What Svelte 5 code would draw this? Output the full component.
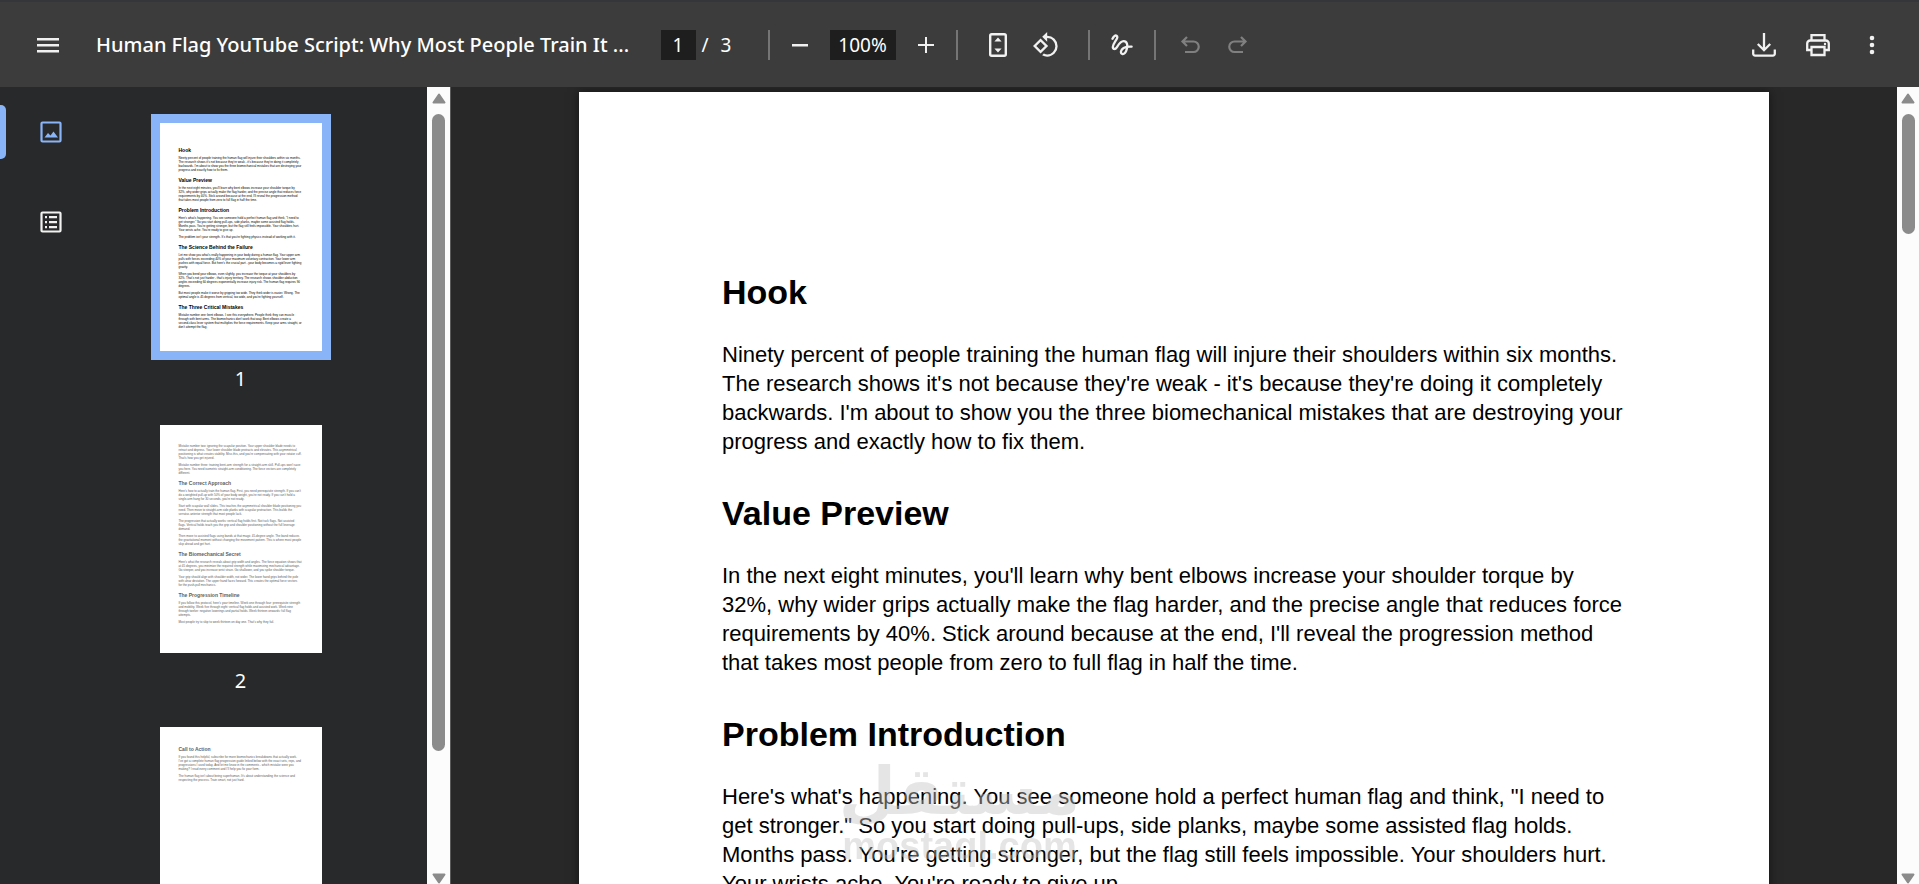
<script>
  const title = "Human Flag YouTube Script: Why Most People Train It ...";

  let currentPage = $state("1");
  let zoom = $state("100%");
  let activeTab = $state("thumbnails");

  // Every block is a heading or a paragraph; "\n" marks the line ends of the PDF
  const pages = [
    [
      { type: "h", text: "Hook" },
      {
        type: "p",
        text: "Ninety percent of people training the human flag will injure their shoulders within six months.\nThe research shows it's not because they're weak - it's because they're doing it completely\nbackwards. I'm about to show you the three biomechanical mistakes that are destroying your\nprogress and exactly how to fix them.",
      },
      { type: "h", text: "Value Preview" },
      {
        type: "p",
        text: "In the next eight minutes, you'll learn why bent elbows increase your shoulder torque by\n32%, why wider grips actually make the flag harder, and the precise angle that reduces force\nrequirements by 40%. Stick around because at the end, I'll reveal the progression method\nthat takes most people from zero to full flag in half the time.",
      },
      { type: "h", text: "Problem Introduction" },
      {
        type: "p",
        text: "Here's what's happening. You see someone hold a perfect human flag and think, \"I need to\nget stronger.\" So you start doing pull-ups, side planks, maybe some assisted flag holds.\nMonths pass. You're getting stronger, but the flag still feels impossible. Your shoulders hurt.\nYour wrists ache. You're ready to give up.",
      },
      {
        type: "p",
        text: "The problem isn't your strength. It's that you're fighting physics instead of working with it.",
      },
      { type: "h", text: "The Science Behind the Failure" },
      {
        type: "p",
        text: "Let me show you what's really happening in your body during a human flag. Your upper arm\npulls with forces exceeding 40% of your maximum voluntary contraction. Your lower arm\npushes with equal force. But here's the crucial part - your body becomes a rigid lever fighting\ngravity.",
      },
      {
        type: "p",
        text: "When you bend your elbows, even slightly, you increase the torque at your shoulders by\n32%. That's not just harder - that's injury territory. The research shows shoulder abduction\nangles exceeding 60 degrees exponentially increase injury risk. The human flag requires 90\ndegrees.",
      },
      {
        type: "p",
        text: "But most people make it worse by gripping too wide. They think wider is easier. Wrong. The\noptimal angle is 45 degrees from vertical, too wide, and you're fighting yourself.",
      },
      { type: "h", text: "The Three Critical Mistakes" },
      {
        type: "p",
        text: "Mistake number one: bent elbows. I see this everywhere. People think they can muscle\nthrough with bent arms. The biomechanics don't work that way. Bent elbows create a\nsecond-class lever system that multiplies the force requirements. Keep your arms straight, or\ndon't attempt the flag.",
      },
    ],
    [
      {
        type: "p",
        text: "Mistake number two: ignoring the scapular position. Your upper shoulder blade needs to\nretract and depress. Your lower shoulder blade protracts and elevates. This asymmetrical\npositioning is what creates stability. Miss this, and you're compensating with your rotator cuff.\nThat's how you get injured.",
      },
      {
        type: "p",
        text: "Mistake number three: training bent-arm strength for a straight-arm skill. Pull-ups won't save\nyou here. You need isometric straight-arm conditioning. The force vectors are completely\ndifferent.",
      },
      { type: "h", text: "The Correct Approach" },
      {
        type: "p",
        text: "Here's how to actually train the human flag. First, you need prerequisite strength. If you can't\ndo a weighted pull-up with 50% of your body weight, you're not ready. If you can't hold a\nsingle-arm hang for 30 seconds, you're not ready.",
      },
      {
        type: "p",
        text: "Start with scapular wall slides. This teaches the asymmetrical shoulder blade positioning you\nneed. Then move to straight-arm side planks with scapular protraction. This builds the\nserratus anterior strength that most people lack.",
      },
      {
        type: "p",
        text: "The progression that actually works: vertical flag holds first. Not tuck flags. Not assisted\nflags. Vertical holds teach you the grip and shoulder positioning without the full leverage\ndemand.",
      },
      {
        type: "p",
        text: "Then move to assisted flags using bands at that magic 45-degree angle. The band reduces\nthe gravitational moment without changing the movement pattern. This is where most people\nskip ahead and get hurt.",
      },
      { type: "h", text: "The Biomechanical Secret" },
      {
        type: "p",
        text: "Here's what the research reveals about grip width and angles. The force equation shows that\nat 45 degrees, you minimize the required strength while maximizing mechanical advantage.\nGo steeper, and you increase wrist strain. Go shallower, and you spike shoulder torque.",
      },
      {
        type: "p",
        text: "Your grip should align with shoulder width, not wider. The lower hand grips behind the pole\nwith ulnar deviation. The upper hand faces forward. This creates the optimal force vectors\nfor the push-pull mechanics.",
      },
      { type: "h", text: "The Progression Timeline" },
      {
        type: "p",
        text: "If you follow this protocol, here's your timeline. Week one through four: prerequisite strength\nand mobility. Week five through eight: vertical flag holds and assisted work. Week nine\nthrough twelve: negative lowerings and partial holds. Week thirteen onwards: full flag\nattempts.",
      },
      {
        type: "p",
        text: "Most people try to skip to week thirteen on day one. That's why they fail.",
      },
    ],
    [
      { type: "h", text: "Call to Action" },
      {
        type: "p",
        text: "If you found this helpful, subscribe for more biomechanics breakdowns that actually work.\nI've got a complete human flag progression guide linked below with the exact sets, reps, and\nprogressions I used today. And let me know in the comments - which mistake were you\nmaking? I read every comment and I'll help you fix your form.",
      },
      {
        type: "p",
        text: "The human flag isn't about being superhuman. It's about understanding the science and\nrespecting the process. Train smart, not just hard.",
      },
    ],
  ];
</script>

{#snippet blocks(list)}
  {#each list as block}
    {#if block.type === "h"}
      <h2>{block.text}</h2>
    {:else}
      <p>{block.text}</p>
    {/if}
  {/each}
{/snippet}

{#snippet scrollbar(kind)}
  <div class="scrollbar {kind}" aria-hidden="true">
    <svg class="arrow" width="14" height="11" viewBox="0 0 14 11">
      <path d="M7 1.5 12.5 9.5H1.5z" fill="#8b8b8b" stroke="#8b8b8b" stroke-width="2" stroke-linejoin="round" />
    </svg>
    <div class="track"><div class="thumb"></div></div>
    <svg class="arrow" width="14" height="11" viewBox="0 0 14 11">
      <path d="M7 9.5 12.5 1.5H1.5z" fill="#8b8b8b" stroke="#8b8b8b" stroke-width="2" stroke-linejoin="round" />
    </svg>
  </div>
{/snippet}

<div class="app">
  <header class="toolbar">
    <div class="start">
      <button class="btn" aria-label="Menu">
        <svg width="22" height="16" viewBox="0 0 22 16" fill="#f1f1f1">
          <path d="M0 1h22v2.5H0zM0 7h22v2.5H0zM0 13h22v2.5H0z" />
        </svg>
      </button>
      <h1 class="title">{title}</h1>
    </div>

    <div class="center">
      <div class="page-selector">
        <input class="field page-field" aria-label="Page number" bind:value={currentPage} />
        <span class="slash">/</span>
        <span>{pages.length}</span>
      </div>
      <span class="separator"></span>
      <button class="btn small" aria-label="Zoom out">
        <svg width="18" height="18" viewBox="0 0 18 18" fill="#f1f1f1"><path d="M1 8h16v2.5H1z" /></svg>
      </button>
      <input class="field zoom-field" aria-label="Zoom level" bind:value={zoom} />
      <button class="btn small" aria-label="Zoom in">
        <svg width="18" height="18" viewBox="0 0 18 18" fill="#f1f1f1">
          <path d="M1 8h7V1h2v7h7v2h-7v7H8v-7H1z" />
        </svg>
      </button>
      <span class="separator"></span>
      <div class="pair">
        <button class="btn" aria-label="Fit to page">
          <svg width="18" height="24" viewBox="0 0 18 24">
            <rect x="1.2" y="1.2" width="15.6" height="21.6" rx="1.5" fill="none" stroke="#f1f1f1" stroke-width="2.4" />
            <path d="M9 4.5l3.6 4H5.4zM9 19.5l3.6-4H5.4z" fill="#f1f1f1" />
          </svg>
        </button>
        <button class="btn" aria-label="Rotate counterclockwise">
          <svg width="28" height="28" viewBox="0 0 24 24" fill="#f1f1f1">
            <path
              d="M7.34 6.41.86 12.9l6.49 6.48 6.49-6.48-6.5-6.49zM3.69 12.9l3.66-3.66L11 12.9l-3.66 3.66-3.65-3.66zm15.67-6.26A8.95 8.95 0 0 0 13 4V.76L8.76 5 13 9.24V6c1.79 0 3.58.68 4.95 2.05a7.007 7.007 0 0 1 0 9.9 6.973 6.973 0 0 1-7.79 1.44l-1.49 1.49C10.02 21.62 11.51 22 13 22c2.3 0 4.61-.88 6.36-2.64a8.98 8.98 0 0 0 0-12.72z"
            />
          </svg>
        </button>
      </div>
      <span class="separator"></span>
      <button class="btn draw" aria-label="Draw">
        <svg width="22" height="22" viewBox="0 0 22 22" fill="none" stroke="#f1f1f1" stroke-width="2.3" stroke-linecap="round">
          <path
            d="M1.5 4.8C2.5 2.5 4.2 1 5.6 1.700C8.500 3.500 1.500 9.500 1.800 13.200C2 15.500 4.300 15.600 5.800 13.300C7.600 10.500 9.500 7.200 12.600 7.200C16.200 7.200 16.800 11 15.800 15C15 18.600 13 20.600 11.200 20C9 19.200 9.800 15.600 12.600 13.900C14.800 12.700 17.500 12.500 20.600 12.600"
          />
        </svg>
      </button>
      <span class="separator"></span>
      <div class="history">
        <button class="btn history-btn" aria-label="Undo" disabled>
          <svg width="20" height="18" viewBox="0 0 20 18" fill="none" stroke="#808080" stroke-width="2.2">
            <path d="M7 1 2.500 5.500 7 10M3 5.500h10.500a4.700 4.700 0 0 1 0 10.500H5" />
          </svg>
        </button>
        <button class="btn history-btn" aria-label="Redo" disabled>
          <svg width="20" height="18" viewBox="0 0 20 18" fill="none" stroke="#808080" stroke-width="2.2">
            <path d="M13 1 17.500 5.500 13 10M17 5.500H6.500a4.700 4.700 0 0 0 0 10.500H15" />
          </svg>
        </button>
      </div>
    </div>

    <div class="end">
      <button class="btn" aria-label="Download">
        <svg width="24" height="24" viewBox="0 0 24 24" fill="none" stroke="#f1f1f1" stroke-width="2.3">
          <path d="M12 0v17M5.800 11 12 17.200 18.200 11M1.200 16.500v4a2 2 0 0 0 2 2.200h17.600a2 2 0 0 0 2-2.200v-4" />
        </svg>
      </button>
      <button class="btn" aria-label="Print">
        <svg width="24" height="24" viewBox="0 0 24 24" fill="none" stroke="#f1f1f1" stroke-width="2.300">
          <path d="M5.500 7.500V2.200h13v5.300M5.500 17H1.200V10.500a3 3 0 0 1 3-3h15.600a3 3 0 0 1 3 3V17h-4.300" />
          <path d="M5.500 14h13v8h-13z" />
          <circle cx="19" cy="11" r="1.200" fill="#f1f1f1" stroke="none" />
        </svg>
      </button>
      <button class="btn" aria-label="More actions">
        <svg width="6" height="20" viewBox="0 0 6 20" fill="#f1f1f1">
          <circle cx="3" cy="3" r="2.300" />
          <circle cx="3" cy="10" r="2.300" />
          <circle cx="3" cy="17" r="2.300" />
        </svg>
      </button>
    </div>
  </header>

  <div class="content">
    <aside class="sidebar">
      <nav class="tabs">
        <button
          class="tab"
          class:active={activeTab === "thumbnails"}
          aria-label="Thumbnails"
          onclick={() => (activeTab = "thumbnails")}
        >
          <svg width="22" height="22" viewBox="0 0 22 22">
            <rect x="1.500" y="1.500" width="19" height="19" rx="1" fill="none" stroke="currentColor" stroke-width="2.200" />
            <path d="M4.500 16.500 8 12l2.500 2.500 3-4 4.500 6z" fill="currentColor" />
          </svg>
        </button>
        <button
          class="tab"
          class:active={activeTab === "outline"}
          aria-label="Document outline"
          onclick={() => (activeTab = "outline")}
        >
          <svg width="22" height="22" viewBox="0 0 22 22">
            <rect x="1.500" y="1.500" width="19" height="19" rx="1" fill="none" stroke="currentColor" stroke-width="2.200" />
            <path
              d="M5 5h2v2.200H5zM9 5h8v2.200H9zM5 10h2v2.200H5zM9 10h8v2.200H9zM5 15h2v2.200H5zM9 15h8v2.200H9z"
              fill="currentColor"
            />
          </svg>
        </button>
      </nav>

      <div class="thumbnails">
        {#each pages as page, i}
          <div class="thumbnail" class:selected={currentPage === String(i + 1)}>
            <button
              class="thumb-page"
              class:opening={i === 0}
              aria-label="Page {i + 1}"
              onclick={() => (currentPage = String(i + 1))}
            >
              {@render blocks(page)}
            </button>
            <span class="thumb-label">{i + 1}</span>
          </div>
        {/each}
      </div>
      {@render scrollbar("long")}
    </aside>

    <main class="viewer">
      <div class="canvas">
        <article class="page">
          {@render blocks(pages[0])}
        </article>
      </div>
      {@render scrollbar("short")}
    </main>
  </div>

  <div class="watermark" aria-hidden="true">
    <span class="mark-ar" lang="ar" dir="rtl">مستقل</span>
    <span class="mark-en">mostaql.com</span>
  </div>
</div>

<style>
  :global(body) {
    margin: 0;
    background: #282828;
  }

  .app {
    display: flex;
    flex-direction: column;
    height: 100vh;
    overflow: hidden;
    font-family: "Noto Sans", "Open Sans", sans-serif;
    color: #fff;
  }

  h1,
  h2,
  p {
    margin: 0;
  }

  .toolbar {
    display: grid;
    grid-template-columns: 1fr auto 1fr;
    align-items: center;
    flex: none;
    box-sizing: border-box;
    height: 87px;
    padding: 0 23px 0 24px;
    background: #3c3c3c;
    border-top: 2px solid #35363a;
  }

  .start,
  .center,
  .end,
  .page-selector,
  .pair,
  .history {
    display: flex;
    align-items: center;
  }

  .title {
    margin-left: 24px;
    font-size: 20px;
    font-weight: 500;
    line-height: 28px;
    white-space: nowrap;
  }

  .btn {
    display: flex;
    align-items: center;
    justify-content: center;
    width: 48px;
    height: 48px;
    padding: 0;
    border: none;
    border-radius: 50%;
    background: none;
    cursor: pointer;
  }

  .btn:hover:enabled {
    background: rgba(255, 255, 255, 0.08);
  }

  .btn.small {
    width: 36px;
    height: 36px;
  }

  .btn.draw {
    width: 40px;
  }

  .btn.history-btn {
    width: 44px;
  }

  .history {
    gap: 4px;
  }

  .pair {
    margin: 0 6px 0 4px;
  }

  .page-selector {
    gap: 6px;
    min-width: 95px;
    font-size: 19px;
  }

  .slash {
    margin-right: 6px;
  }

  .field {
    box-sizing: border-box;
    height: 30px;
    padding: 0;
    border: none;
    background: #1e1e1e;
    color: #fff;
    font-family: inherit;
    font-size: 19px;
    text-align: center;
  }

  .page-field {
    width: 35px;
  }

  .zoom-field {
    width: 66px;
    margin: 0 12px;
  }

  .separator {
    width: 2px;
    height: 30px;
    margin: 0 12px;
    background: #757575;
  }

  .end {
    justify-content: flex-end;
    gap: 6px;
  }

  .content {
    display: flex;
    flex: 1;
    min-height: 0;
  }

  .sidebar {
    display: flex;
    flex: none;
    box-sizing: border-box;
    width: 451px;
    background: #28292b;
    border-right: 1px solid #5a5a5a;
  }

  .tabs {
    display: flex;
    flex-direction: column;
    gap: 36px;
    width: 102px;
    padding-top: 18px;
  }

  .tab {
    position: relative;
    display: flex;
    align-items: center;
    justify-content: center;
    height: 54px;
    padding: 0;
    border: none;
    background: none;
    color: #f1f1f1;
    cursor: pointer;
  }

  .tab.active {
    color: #8ab4f8;
  }

  .tab.active::before {
    content: "";
    position: absolute;
    left: 0;
    top: 0;
    bottom: 0;
    width: 6px;
    border-radius: 0 5px 5px 0;
    background: #8ab4f8;
  }

  .thumbnails {
    display: flex;
    flex: 1;
    flex-direction: column;
    align-items: center;
    gap: 32px;
    padding: 36px 48px 0 0;
    overflow: hidden;
  }

  .thumbnail {
    display: flex;
    flex: none;
    flex-direction: column;
    align-items: center;
    gap: 14px;
  }

  .thumb-page {
    display: flex;
    flex-direction: column;
    justify-content: flex-start;
    box-sizing: border-box;
    width: 162px;
    height: 228px;
    padding: 19px 19px 0;
    border: none;
    background: #fff;
    color: #606060;
    font-family: "Liberation Sans", Arial, sans-serif;
    font-size: 3px;
    line-height: 4px;
    text-align: left;
    white-space: pre;
    cursor: pointer;
  }

  .thumb-page.opening {
    padding-top: 24px;
  }

  .selected .thumb-page {
    box-shadow: 0 0 0 9px #8ab4f8;
    color: #000;
  }

  .thumb-page h2 {
    font-size: 5px;
    line-height: 6px;
  }

  .thumb-page h2 + p {
    margin-top: 3px;
  }

  .thumb-page p + p {
    margin-top: 3px;
  }

  .thumb-page p + h2 {
    margin-top: 5px;
  }

  .thumb-label {
    font-size: 20px;
    line-height: 28px;
  }

  .scrollbar {
    display: flex;
    flex: none;
    flex-direction: column;
    align-items: center;
    box-sizing: border-box;
    width: 23px;
    padding-top: 6px;
    background: #fcfcfc;
  }

  .scrollbar.short {
    width: 22px;
  }

  .arrow {
    flex: none;
  }

  .track {
    flex: 1;
    margin: 10px 0;
  }

  .thumb {
    width: 13px;
    border-radius: 7px;
    background: #8b8b8b;
  }

  .long .thumb {
    height: 85%;
  }

  .short .thumb {
    height: 16%;
  }

  .viewer {
    display: flex;
    flex: 1;
    min-width: 0;
    background: #282828;
  }

  .canvas {
    flex: 1;
    min-width: 0;
    padding-top: 5px;
    overflow: hidden;
  }

  .page {
    box-sizing: border-box;
    max-width: 1190px;
    margin: 0 auto;
    padding: 180px 130px 144px 143px;
    background: #fff;
    box-shadow: 0 0 10px rgba(0, 0, 0, 0.5);
    color: #000;
    font-family: "Liberation Sans", Arial, sans-serif;
    font-size: 22px;
    line-height: 29px;
    white-space: pre-line;
  }

  .page h2 {
    font-size: 34px;
    line-height: 40px;
  }

  .page h2 + p {
    margin-top: 28px;
  }

  .page p + p {
    margin-top: 24px;
  }

  .page p + h2 {
    margin-top: 37px;
  }

  /* Site stamp that lies over the document */
  .watermark {
    position: fixed;
    right: 0;
    bottom: 18px;
    left: 0;
    display: flex;
    flex-direction: column;
    align-items: center;
    color: #c3c3c3;
    opacity: 0.43;
    pointer-events: none;
  }

  .mark-ar {
    font-family: "DejaVu Sans", sans-serif;
    font-size: 66px;
    font-weight: 700;
    line-height: 68px;
  }

  .mark-en {
    font-family: "Liberation Sans", Arial, sans-serif;
    font-size: 38px;
    font-weight: 700;
    line-height: 40px;
  }
</style>
